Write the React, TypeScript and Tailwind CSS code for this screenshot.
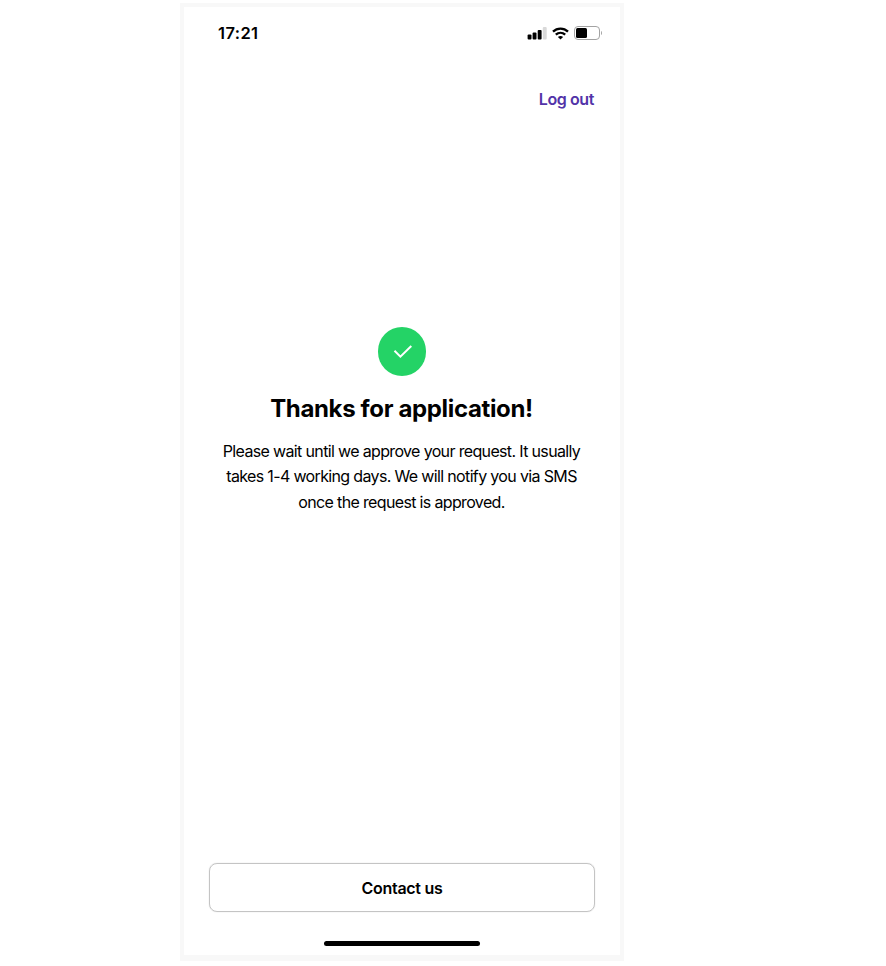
const signalBars = [
  { x: 0.6, y: 7.5, height: 5 },
  { x: 5.6, y: 5.5, height: 7 },
  { x: 10.7, y: 3, height: 9.5 },
  { x: 15.8, y: 0, height: 12.5, fill: "#d9d9d9" },
];

const message = [
  "Please wait until we approve your request. It usually",
  "takes 1-4 working days. We will notify you via SMS",
  "once the request is approved.",
];

const StatusBar = () => {
  return (
    <div className="flex h-[52px] items-center justify-between pr-[18px] pl-[34px]">
      <span className="text-[16.5px] font-semibold leading-5 tracking-[0.4px]">
        17:21
      </span>
      <div className="flex items-center">
        <svg className="mr-[5px] h-[13px] w-5" viewBox="0 0 20 13">
          {signalBars.map((bar) => (
            <rect key={bar.x} {...bar} width="3.9" rx="1" />
          ))}
        </svg>
        <svg className="mr-[5px] h-[13px] w-[17px]" viewBox="0 0 17 13" fill="none">
          <path
            d="M1 4.6C5.2.5 11.8.5 16 4.6M3.8 7.7c2.7-2.5 6.7-2.5 9.4 0"
            stroke="#000"
            strokeWidth="2.3"
          />
          <path d="M5.9 9.9c1.5-1.3 3.7-1.3 5.2 0L8.5 12.6Z" fill="#000" />
        </svg>
        <svg className="h-[14px] w-7" viewBox="0 0 28 14" fill="none">
          <rect x=".5" y=".5" width="25" height="13" rx="3.5" stroke="#a3a3a3" />
          <rect x="2" y="2" width="11" height="10" rx="1.5" fill="#000" />
          <path d="M27 5c1.3.7 1.3 3.3 0 4Z" fill="#a3a3a3" />
        </svg>
      </div>
    </div>
  );
};

const App = () => {
  return (
    <div className="h-[966px] bg-white pt-[3px] pl-[180px] font-['Inter',sans-serif] text-black">
      <div className="flex h-[958px] w-[444px] flex-col border-4 border-b-[6px] border-[#f8f8f8] bg-white">
        <StatusBar />

        <div className="mt-7 flex justify-end pr-[26px]">
          <button className="text-base font-semibold leading-6 tracking-[-0.4px] text-[#5233a8]">
            Log out
          </button>
        </div>

        <div className="mt-[216px] flex flex-col items-center">
          <div className="flex h-[49px] w-12 items-center justify-center rounded-full bg-[#24d366]">
            <svg className="h-[13px] w-[19px]" viewBox="0 0 19 13" fill="none">
              <path d="m1.5 5.8 5.9 5.8L18.3 1" stroke="#fff" strokeWidth="2" />
            </svg>
          </div>
          <h1 className="mt-[17px] pr-px text-2xl font-bold leading-8 tracking-[-0.35px] whitespace-nowrap">
            Thanks for application!
          </h1>
          <div className="mt-[13.5px] pr-px text-center text-base leading-[25.5px] tracking-[-0.65px] whitespace-nowrap">
            {message.map((line) => (
              <p key={line}>{line}</p>
            ))}
          </div>
        </div>

        <div className="mt-auto flex flex-col items-center pb-[9px]">
          <button className="h-[49px] w-[386px] rounded-lg border-[1.5px] border-[#c4c4c4] text-base font-semibold tracking-[-0.3px] shadow-[0_0_1px_#c4c4c4]">
            Contact us
          </button>
          <div className="mt-[29px] h-[5px] w-[156px] rounded-full bg-black" />
        </div>
      </div>
    </div>
  );
};

export default App;
